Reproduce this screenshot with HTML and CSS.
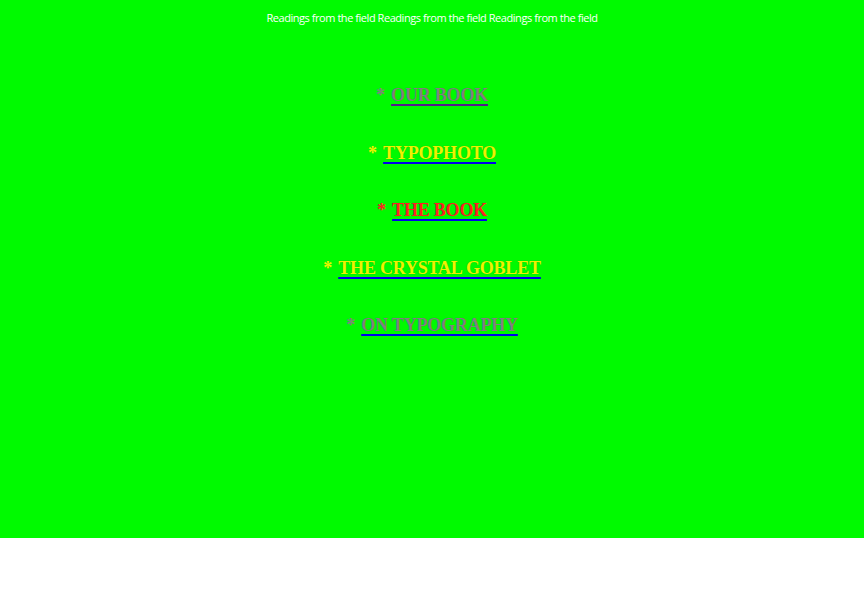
FILE: index.html
```html
<!DOCTYPE html>
<html>
<head>
<meta charset="utf-8">
<link rel="stylesheet" href="styles.css">
</head>
<body>
<div class="page">
  <p class="header">Readings from the field Readings from the field Readings from the field</p>
  <ul class="menu">
    <li class="gray">* <a class="visited" href="#"><span>OUR BOOK</span></a></li>
    <li class="yellow">* <a href="#"><span>TYPOPHOTO</span></a></li>
    <li class="red">* <a href="#"><span>THE BOOK</span></a></li>
    <li class="yellow">* <a href="#"><span>THE CRYSTAL GOBLET</span></a></li>
    <li class="gray">* <a href="#"><span>ON TYPOGRAPHY</span></a></li>
  </ul>
</div>
</body>
</html>
```
FILE: styles.css
```css
html, body { margin: 0; padding: 0; background: #fff; }
.page {
  background: #00fa00;
  height: 538px;
  display: flex;
  flex-direction: column;
  align-items: center;
}
.header {
  margin: 11px 0 0;
  color: #fff;
  font-family: "Open Sans", sans-serif;
  font-size: 11px;
  letter-spacing: -0.45px;
  line-height: 14px;
}
.menu {
  list-style: none;
  margin: 59px 0 0;
  padding: 0;
  display: flex;
  flex-direction: column;
  align-items: center;
  gap: 35.5px;
  font-family: "Liberation Serif", serif;
  font-weight: bold;
  font-size: 18px;
  line-height: 22px;
  letter-spacing: -0.2px;
}
.menu a { color: #0000ee; text-decoration: underline; text-decoration-thickness: 2px; text-underline-offset: 3px; margin-left: 2px; }
.menu a.visited { color: #551a8b; }
.gray, .gray span { color: #808080; }
.yellow, .yellow span { color: #f0f000; }
.red, .red span { color: #ff2020; }
.menu span { text-shadow: 0 0 1px rgba(0,0,0,0.25); }
```
